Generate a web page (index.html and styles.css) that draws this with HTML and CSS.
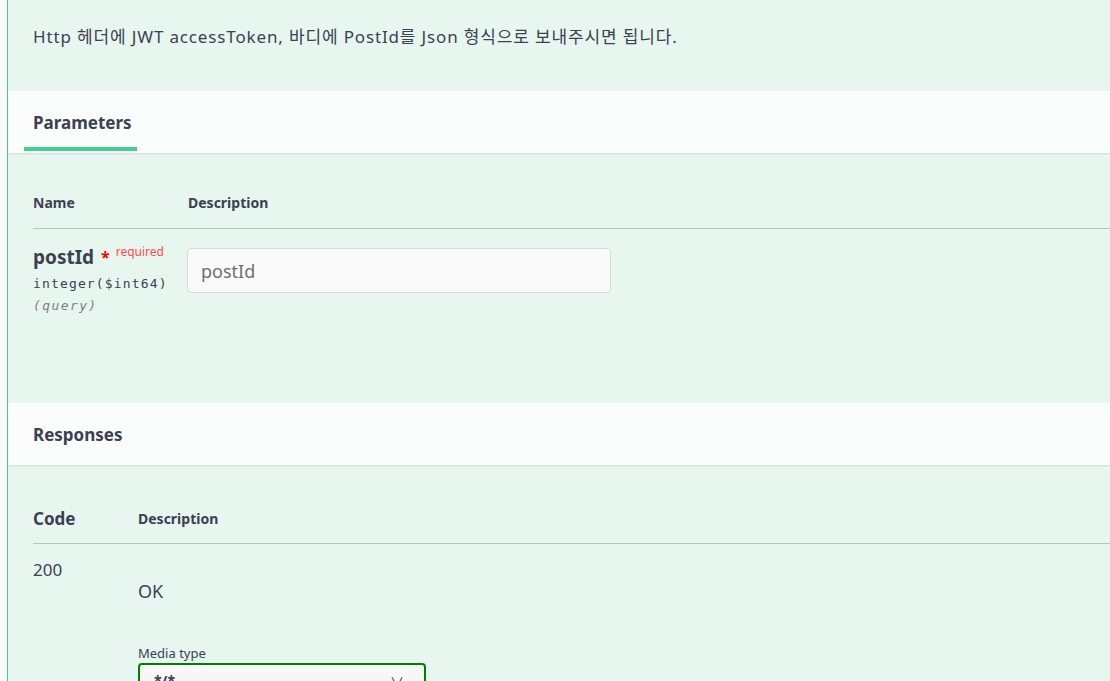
FILE: index.html
```html
<!DOCTYPE html>
<html lang="ko">
<head>
<meta charset="utf-8">
<link rel="stylesheet" href="styles.css">
</head>
<body>
<div class="opblock">
  <div class="desc">Http 헤더에 JWT accessToken, 바디에 PostId를 Json 형식으로 보내주시면 됩니다.</div>

  <div class="sec-header">
    <div class="tab">Parameters</div>
  </div>

  <div class="params">
    <div class="thead">
      <div class="col-name">Name</div>
      <div class="col-desc">Description</div>
    </div>
    <div class="prow">
      <div class="col-name">
        <div class="pname">postId <span class="star">*</span><span class="req">required</span></div>
        <div class="ptype">integer($int64)</div>
        <div class="pin">(query)</div>
      </div>
      <div class="col-desc">
        <input class="pinput" type="text" placeholder="postId">
      </div>
    </div>
  </div>

  <div class="sec-header">
    <div class="title">Responses</div>
  </div>

  <div class="responses">
    <div class="rhead">
      <div class="col-code code-h">Code</div>
      <div class="col-rdesc desc-h">Description</div>
    </div>
    <div class="rrow">
      <div class="col-code code">200</div>
      <div class="col-rdesc">
        <div class="ok">OK</div>
        <div class="media-label">Media type</div>
        <div class="select"><span>*/*</span><span class="arrow">∨</span></div>
      </div>
    </div>
  </div>
</div>
</body>
</html>
```

FILE: styles.css
```css
html, body {
  margin: 0;
  padding: 0;
  background: #fafafa;
  overflow: hidden;
  width: 1110px;
  height: 681px;
}

body {
  font-family: "Noto Sans", "Noto Sans CJK KR", sans-serif;
  color: #3b4151;
}

.opblock {
  margin-left: 7px;
  width: 1300px;
  border-left: 1px solid #49cc90;
  background: #e7f6ef;
  min-height: 800px;
}

.desc {
  height: 91px;
  box-sizing: border-box;
  padding: 25px 0 0 25px;
  font-size: 17px;
  line-height: 24px;
  letter-spacing: 0.85px;
}

.sec-header {
  height: 62px;
  background: #fafdfc;
  box-shadow: 0 1px 2px rgba(0, 0, 0, .1);
  display: flex;
  align-items: center;
  padding-left: 25px;
  position: relative;
}

.tab {
  font-size: 17px;
  font-weight: 700;
  line-height: 24px;
  align-self: stretch;
  display: flex;
  align-items: center;
  padding: 8px 5px 0 9px;
  margin-left: -9px;
  border-bottom: 4px solid #49cc90;
  margin-bottom: 2px;
  box-sizing: border-box;
}

.title {
  font-size: 17px;
  font-weight: 700;
  line-height: 24px;
  padding-top: 2px;
}

.params {
  height: 250px;
  box-sizing: border-box;
  padding: 40px 0 0 25px;
}

.thead {
  display: flex;
  font-size: 14px;
  font-weight: 700;
  line-height: 20px;
  padding-bottom: 15px;
  border-bottom: 1px solid #b9c2bf;
}

.col-name {
  width: 155px;
  flex: none;
}

.prow {
  display: flex;
  padding-top: 16px;
}

.pname {
  font-size: 19px;
  font-weight: 700;
  line-height: 24px;
  white-space: nowrap;
}

.star {
  color: #ff0000;
  font-size: 16px;
  position: relative;
  top: -1px;
  margin-left: 2px;
}

.req {
  color: #ff4b4b;
  font-size: 12px;
  font-weight: 400;
  position: relative;
  top: -8px;
  margin-left: 6px;
}

.ptype {
  font-family: "DejaVu Sans Mono", "Liberation Mono", monospace;
  font-size: 13px;
  line-height: 18px;
  margin-top: 3px;
  letter-spacing: 1.15px;
}

.pin {
  font-family: "DejaVu Sans Mono", "Liberation Mono", monospace;
  font-size: 13px;
  font-style: italic;
  color: #808080;
  line-height: 18px;
  margin-top: 4px;
  letter-spacing: 1.4px;
}

.pinput {
  display: block;
  width: 424px;
  height: 45px;
  box-sizing: border-box;
  margin: 3px 0 0 -1px;
  border: 1px solid #d9d9d9;
  border-radius: 4px;
  background: #fafafa;
  font-family: "Noto Sans", sans-serif;
  font-size: 18px;
  padding: 0 13px;
  color: #3b4151;
  outline: none;
}

.pinput::placeholder {
  color: #6f6f6f;
}

.responses {
  padding: 42px 0 0 25px;
}

.rhead {
  display: flex;
  align-items: center;
  padding-bottom: 12px;
  border-bottom: 1px solid #b9c2bf;
}

.col-code {
  width: 105px;
  flex: none;
}

.code-h {
  font-size: 17px;
  font-weight: 700;
  line-height: 24px;
}

.desc-h {
  font-size: 14px;
  font-weight: 700;
  line-height: 20px;
}

.rrow {
  display: flex;
  padding-top: 14px;
}

.code {
  font-size: 17px;
  line-height: 24px;
}

.ok {
  font-size: 18px;
  line-height: 24px;
  margin-top: 21px;
}

.media-label {
  font-size: 13px;
  line-height: 18px;
  margin-top: 41px;
}

.select {
  width: 288px;
  height: 38px;
  box-sizing: border-box;
  margin-top: 1px;
  border: 2px solid #008000;
  border-radius: 4px;
  background: #f7f7f7;
  display: flex;
  justify-content: space-between;
  padding: 6px 14px 0 14px;
  font-size: 14px;
  font-weight: 700;
}

.arrow {
  font-weight: 400;
  margin-right: 6px;
}
```
